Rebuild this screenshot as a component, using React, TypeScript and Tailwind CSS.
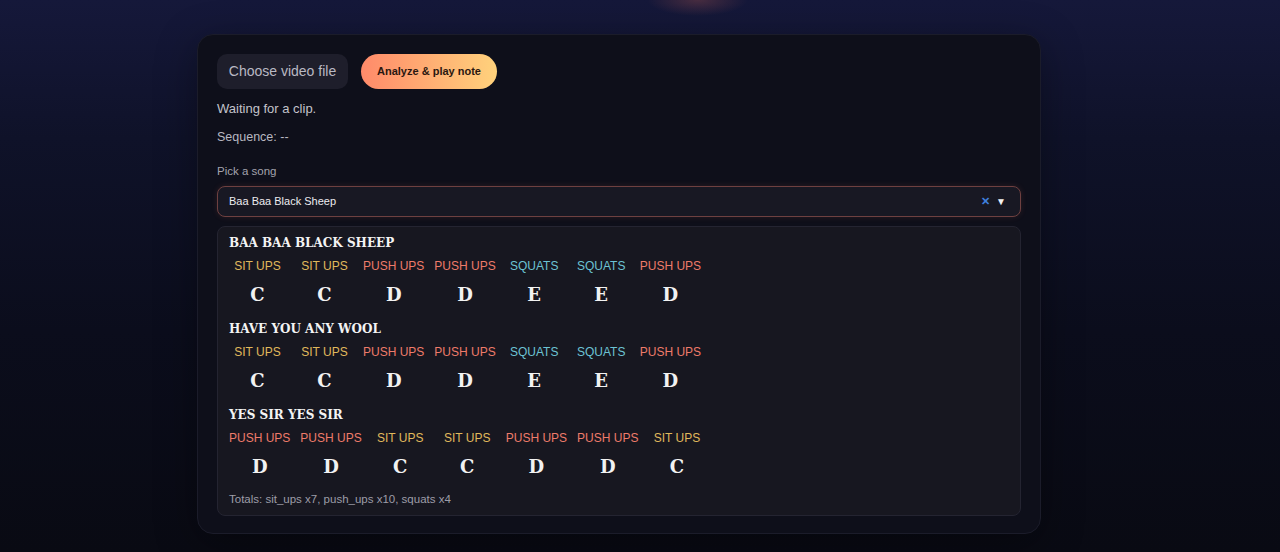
import React from "react";

type Ex = "sit" | "push" | "squat";
const LABEL: Record<Ex, string> = { sit: "SIT UPS", push: "PUSH UPS", squat: "SQUATS" };
const COLOR: Record<Ex, string> = {
  sit: "text-[#e0b95c]",
  push: "text-[#ee7b6a]",
  squat: "text-[#6cc3d4]",
};

const songs: { title: string; notes: [Ex, string][] }[] = [
  {
    title: "BAA BAA BLACK SHEEP",
    notes: [["sit", "C"], ["sit", "C"], ["push", "D"], ["push", "D"], ["squat", "E"], ["squat", "E"], ["push", "D"]],
  },
  {
    title: "HAVE YOU ANY WOOL",
    notes: [["sit", "C"], ["sit", "C"], ["push", "D"], ["push", "D"], ["squat", "E"], ["squat", "E"], ["push", "D"]],
  },
  {
    title: "YES SIR YES SIR",
    notes: [["push", "D"], ["push", "D"], ["sit", "C"], ["sit", "C"], ["push", "D"], ["push", "D"], ["sit", "C"]],
  },
];

export default function App() {
  return (
    <div
      className="w-full min-h-[552px] pt-[34px] pb-[18px] bg-[radial-gradient(ellipse_50px_16px_at_54.5%_0%,rgba(255,120,90,0.22),transparent),linear-gradient(180deg,#15183a_0%,#0f1229_25%,#0b0d1c_60%,#090a13_100%)]"
      style={{ fontFamily: '"Liberation Sans", Arial, sans-serif' }}
    >
      <div className="ml-[197px] w-[844px] h-[500px] rounded-[16px] border border-[#1b1c2a] bg-[#0e0f1a] px-[19px] pt-[19px] shadow-[0_10px_40px_rgba(0,0,0,0.35)]">
        <div className="flex items-center gap-[13px]">
          <div className="h-[35px] w-[131px] rounded-[10px] bg-[#1e1e2b] flex items-center justify-center text-[14px] text-[#b9b9c3]">
            Choose video file
          </div>
          <div className="h-[35px] w-[136px] rounded-full bg-[linear-gradient(90deg,#ff8a6a,#ffd27c)] flex items-center justify-center text-[11px] font-bold text-[#2a1710]">
            Analyze &amp; play note
          </div>
        </div>
        <div className="mt-[10px] h-[20px] leading-[20px] text-[13px] text-[#c3c3cb]">Waiting for a clip.</div>
        <div className="mt-[8px] h-[20px] leading-[20px] text-[12.5px] text-[#b8b8c1]">Sequence: --</div>
        <div className="mt-[16px] h-[16px] leading-[16px] text-[11.5px] text-[#a3a3ad]">Pick a song</div>
        <div className="mt-[7px] h-[31px] rounded-[8px] border border-[#6e4040] bg-[#181823] flex items-center pl-[11px] pr-[14px] shadow-[0_0_6px_rgba(255,120,100,0.12)]">
          <span className="text-[11px] text-[#ececf0]">Baa Baa Black Sheep</span>
          <span className="ml-auto text-[11px] font-bold text-[#3f7fdc] leading-none">✕</span>
          <span className="ml-[6px] text-[10px] text-[#f2f2f2] leading-none">▼</span>
        </div>
        <div className="mt-[9px] rounded-[8px] border border-[#242431] bg-[#171720] px-[11px] pt-[8px] pb-[8px]">
          {songs.map((s, i) => (
            <div key={i} className={i > 0 ? "mt-[14px]" : ""}>
              <div
                className="h-[16px] leading-[16px] text-[12px] font-bold text-[#f4f4f4]"
                style={{ fontFamily: '"DejaVu Serif", "Liberation Serif", serif' }}
              >
                {s.title}
              </div>
              <div className="mt-[7px] flex gap-[10px]">
                {s.notes.map(([ex, n], j) => (
                  <div key={j} className="min-w-[57px] flex flex-col items-center">
                    <div className={`h-[16px] leading-[16px] text-[12px] whitespace-nowrap ${COLOR[ex]}`}>{LABEL[ex]}</div>
                    <div
                      className="mt-[9px] h-[24px] leading-[24px] text-[18px] font-bold text-[#f2f2f2]"
                      style={{ fontFamily: '"DejaVu Serif", "Liberation Serif", serif' }}
                    >
                      {n}
                    </div>
                  </div>
                ))}
              </div>
            </div>
          ))}
          <div className="mt-[12px] h-[16px] leading-[16px] text-[11.5px] text-[#9d9da8]">
            Totals: sit_ups x7, push_ups x10, squats x4
          </div>
        </div>
      </div>
    </div>
  );
}
